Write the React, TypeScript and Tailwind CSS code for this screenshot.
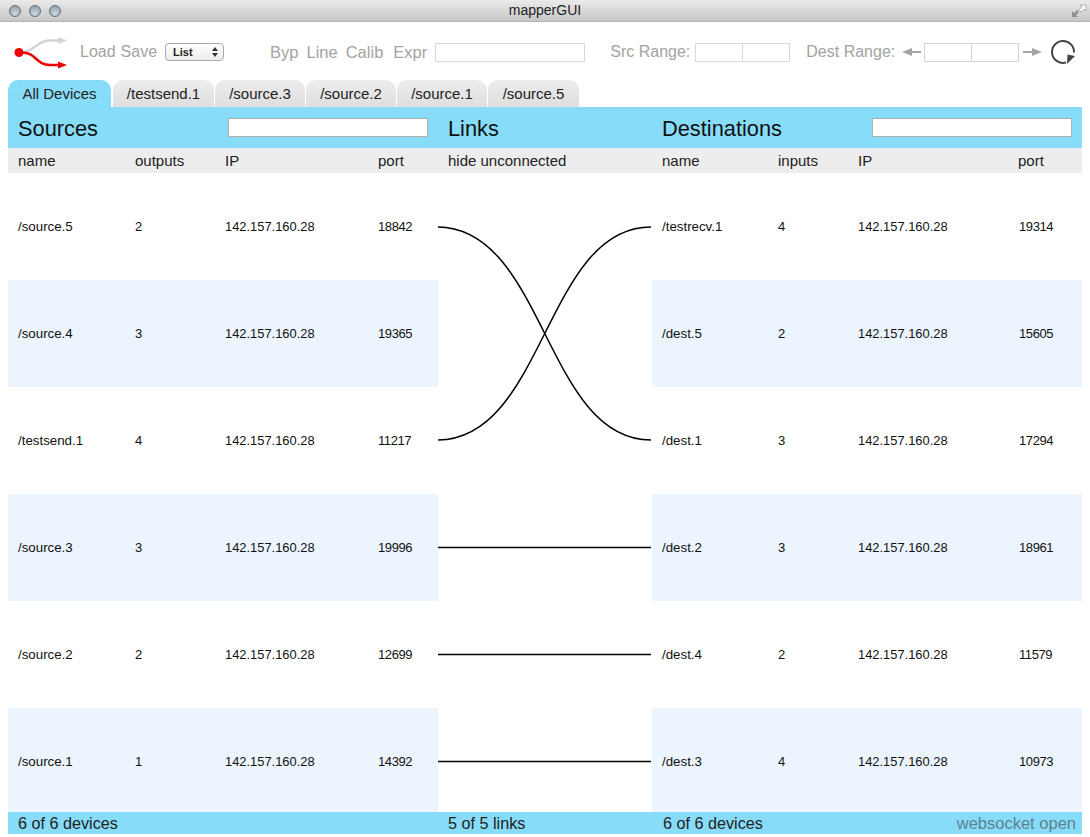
import React from "react";

const sources = [
  ["/source.5", "2", "142.157.160.28", "18842"],
  ["/source.4", "3", "142.157.160.28", "19365"],
  ["/testsend.1", "4", "142.157.160.28", "11217"],
  ["/source.3", "3", "142.157.160.28", "19996"],
  ["/source.2", "2", "142.157.160.28", "12699"],
  ["/source.1", "1", "142.157.160.28", "14392"],
];

const destinations = [
  ["/testrecv.1", "4", "142.157.160.28", "19314"],
  ["/dest.5", "2", "142.157.160.28", "15605"],
  ["/dest.1", "3", "142.157.160.28", "17294"],
  ["/dest.2", "3", "142.157.160.28", "18961"],
  ["/dest.4", "2", "142.157.160.28", "11579"],
  ["/dest.3", "4", "142.157.160.28", "10973"],
];

const tabs = [
  ["/testsend.1", "w-[101px]"],
  ["/source.3", "w-[90px]"],
  ["/source.2", "w-[90px]"],
  ["/source.1", "w-[90px]"],
  ["/source.5", "w-[91px]"],
];

function TrafficLight() {
  return (
    <div className="h-[12px] w-[12px] rounded-full border border-[#66717c] bg-[radial-gradient(circle_at_50%_75%,#cfd9e0,#8496a6)]" />
  );
}

function Logo() {
  return (
    <svg width="56" height="36" viewBox="0 0 56 36" className="shrink-0">
      <path d="M8 18.5 C20 18.5 22 6.5 36 6.5 L46 6.5" fill="none" stroke="#d4d4d4" strokeWidth="2.5" />
      <path d="M44 3 L53 6.5 L44 10 Z" fill="#d4d4d4" />
      <path d="M8 18.5 C22 18.5 22 31 36 31 L46 31" fill="none" stroke="#f00000" strokeWidth="2.5" />
      <path d="M44 27.5 L53 31 L44 34.5 Z" fill="#f00000" />
      <circle cx="5" cy="18.5" r="4.5" fill="#f00000" />
    </svg>
  );
}

function DeviceTable({ rows, widths }: { rows: string[][]; widths: string[] }) {
  return (
    <div className="w-[430px] shrink-0">
      {rows.map((row, i) => (
        <div
          key={row[0]}
          className={`flex items-center text-[#111] ${i === 5 ? "h-[104px] pt-[3px]" : "h-[107px]"} ${i % 2 === 1 ? "bg-[#ecf4fe]" : "bg-white"}`}
        >
          <div className={`pl-[10px] text-[13.3px] ${widths[0]}`}>{row[0]}</div>
          <div className={`text-[13px] ${widths[1]}`}>{row[1]}</div>
          <div className={`text-[12.9px] ${widths[2]}`}>{row[2]}</div>
          <div className="text-[13px] tracking-[-0.4px]">{row[3]}</div>
        </div>
      ))}
    </div>
  );
}

export default function App() {
  return (
    <div className="h-[837px] w-[1090px] overflow-hidden bg-white font-['Liberation_Sans',Arial,sans-serif]">
      <div className="relative flex h-[22px] items-center border-b border-[#b5b5b5] bg-gradient-to-b from-[#ebebeb] to-[#c6c6c6] pl-[9px]">
        <div className="mt-[1px] flex gap-[8px]">
          <TrafficLight />
          <TrafficLight />
          <TrafficLight />
        </div>
        <div className="flex-1 pr-[61px] text-center text-[14px] text-[#222]">mapperGUI</div>
        <svg width="16" height="16" viewBox="0 0 16 16" className="absolute right-[3px] top-[3px]">
          <path d="M9 2 H15 V8 L13 6 L10 9 L8 7 L11 4 Z" fill="#fafafa" stroke="#8f8f8f" strokeWidth="0.6" />
          <path d="M1 8 L3 10 L6 7 L8 9 L5 12 L7 14 H1 Z" fill="#8f8f8f" />
        </svg>
      </div>

      <div className="flex h-[58px] items-center pt-[2px] text-[16px] text-[#a3a3a3]">
        <div className="ml-[14px]">
          <Logo />
        </div>
        <span className="ml-[10px]">Load</span>
        <span className="ml-[5px]">Save</span>
        <div className="ml-[8px] flex h-[18px] w-[59px] items-center justify-between rounded-[4px] border border-[#a8a8a8] bg-gradient-to-b from-white to-[#ececec] pl-[7px] pr-[5px] text-[11px] font-bold text-[#222]">
          List
          <svg width="6" height="10" viewBox="0 0 6 10">
            <path d="M3 0 L6 4 H0 Z M3 10 L0 6 H6 Z" fill="#333" />
          </svg>
        </div>
        <span className="ml-[46px] text-[16.5px]">Byp</span>
        <span className="ml-[8px] text-[16.5px]">Line</span>
        <span className="ml-[8px] text-[16.5px]">Calib</span>
        <span className="ml-[10px] text-[16.5px]">Expr</span>
        <div className="ml-[8px] h-[19px] w-[150px] border border-[#d9d9d9]" />
        <span className="ml-[25px]">Src Range:</span>
        <div className="ml-[5px] flex h-[19px] w-[95px] border border-[#d9d9d9]">
          <div className="w-[47px] border-r border-[#d9d9d9]" />
        </div>
        <span className="ml-[16px]">Dest Range:</span>
        <svg width="20" height="10" viewBox="0 0 20 10" className="ml-[7px]">
          <path d="M0 5 L10 1 V4 H19 V6 H10 V9 Z" fill="#a3a3a3" />
        </svg>
        <div className="ml-[2px] flex h-[19px] w-[95px] border border-[#d4d4d4]">
          <div className="w-[47px] border-r border-[#d4d4d4]" />
        </div>
        <svg width="20" height="10" viewBox="0 0 20 10" className="ml-[4px]">
          <path d="M19 5 L9 1 V4 H0 V6 H9 V9 Z" fill="#a3a3a3" />
        </svg>
        <svg width="26" height="26" viewBox="0 0 26 26" className="ml-[7px]">
          <path d="M16 23.5 A11 11 0 1 1 24 13.5" fill="none" stroke="#444" strokeWidth="2" />
          <path d="M17 25 L25 17 L17.5 15.5 Z" fill="#444" />
        </svg>
      </div>

      <div className="flex h-[27px] gap-[1px] pl-[8px] text-[15px] text-[#222]">
        <div className="mr-[1px] flex w-[103px] items-center justify-center rounded-t-[10px] bg-[#87dcfa] pt-[2px]">All Devices</div>
        {tabs.map(([label, width]) => (
          <div
            key={label}
            className={`flex items-center justify-center rounded-t-[10px] bg-gradient-to-b from-[#ededed] to-[#dedede] pt-[2px] ${width}`}
          >
            {label}
          </div>
        ))}
      </div>

      <div className="ml-[8px] w-[1074px]">
        <div className="flex h-[41px] items-center bg-[#87dcfa] text-[21.8px] text-[#111]">
          <div className="flex w-[430px] items-center justify-between pl-[10px] pr-[10px]">
            <span className="pt-[3px]">Sources</span>
            <div className="h-[19px] w-[200px] border border-[#b0b0b0] bg-white" />
          </div>
          <div className="w-[214px] pl-[10px] pt-[3px]">Links</div>
          <div className="flex w-[430px] items-center justify-between pl-[10px] pr-[10px]">
            <span className="pt-[3px]">Destinations</span>
            <div className="h-[19px] w-[200px] border border-[#b0b0b0] bg-white" />
          </div>
        </div>

        <div className="flex h-[25px] items-center bg-[#ededed] pt-[2px] text-[15px] text-[#222]">
          <div className="w-[127px] pl-[10px]">name</div>
          <div className="w-[90px]">outputs</div>
          <div className="w-[153px]">IP</div>
          <div className="w-[70px]">port</div>
          <div className="w-[204px]">hide unconnected</div>
          <div className="w-[126px] pl-[10px]">name</div>
          <div className="w-[80px]">inputs</div>
          <div className="w-[160px]">IP</div>
          <div>port</div>
        </div>

        <div className="flex h-[639px]">
          <DeviceTable rows={sources} widths={["w-[127px]", "w-[90px]", "w-[153px]"]} />
          <svg width="214" height="639" viewBox="0 0 214 639" className="shrink-0">
            <g fill="none" stroke="#000" strokeWidth="1.5">
              <path d="M-1 54 C107 54 107 267 213 267" />
              <path d="M-1 267 C107 267 107 54 213 54" />
              <path d="M-1 374.5 H213" />
              <path d="M-1 481.5 H213" />
              <path d="M-1 588.5 H213" />
            </g>
          </svg>
          <DeviceTable rows={destinations} widths={["w-[126px]", "w-[80px]", "w-[161px]"]} />
        </div>

        <div className="flex h-[22px] items-center bg-[#87dcfa] pt-[1px] text-[16.2px] text-[#222]">
          <div className="w-[440px] pl-[10px]">6 of 6 devices</div>
          <div className="w-[215px]">5 of 5 links</div>
          <div className="flex-1">6 of 6 devices</div>
          <div className="pr-[6px] text-[16.5px] text-[#5f8290]">websocket open</div>
        </div>
      </div>
    </div>
  );
}
